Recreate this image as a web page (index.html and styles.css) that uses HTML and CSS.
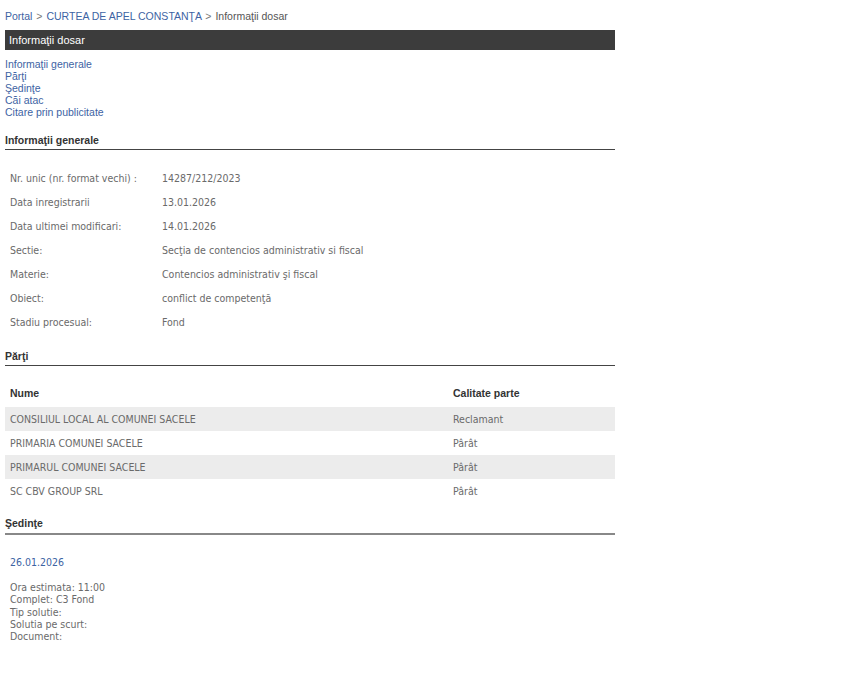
FILE: index.html
```html
<!DOCTYPE html>
<html lang="ro">
<head>
<meta charset="UTF-8" />
<title>Informaţii dosar</title>
<link rel="stylesheet" href="styles.css">
</head>
<body>
<div class="page">
  <div class="breadcrumb">
    <a href="#">Portal</a> <span class="sep">&gt;</span> <a href="#">CURTEA DE APEL CONSTANŢA</a> <span class="sep">&gt;</span> <span class="current">Informaţii dosar</span>
  </div>

  <div class="title-bar">Informaţii dosar</div>

  <div class="toc">
    <a href="#generale">Informaţii generale</a>
    <a href="#parti">Părţi</a>
    <a href="#sedinte">Şedinţe</a>
    <a href="#cai">Căi atac</a>
    <a href="#citare">Citare prin publicitate</a>
  </div>

  <h2 class="section-title first" id="generale">Informaţii generale</h2>
  <table class="info">
    <tr><td class="label">Nr. unic (nr. format vechi) :</td><td>14287/212/2023</td></tr>
    <tr><td class="label">Data inregistrarii</td><td>13.01.2026</td></tr>
    <tr><td class="label">Data ultimei modificari:</td><td>14.01.2026</td></tr>
    <tr><td class="label">Sectie:</td><td>Secţia de contencios administrativ si fiscal</td></tr>
    <tr><td class="label">Materie:</td><td>Contencios administrativ şi fiscal</td></tr>
    <tr><td class="label">Obiect:</td><td>conflict de competenţă</td></tr>
    <tr><td class="label">Stadiu procesual:</td><td>Fond</td></tr>
  </table>

  <h2 class="section-title" id="parti">Părţi</h2>
  <table class="parti">
    <tr><th>Nume</th><th class="col-calitate">Calitate parte</th></tr>
    <tr class="alt"><td>CONSILIUL LOCAL AL COMUNEI SACELE</td><td>Reclamant</td></tr>
    <tr><td>PRIMARIA COMUNEI SACELE</td><td>Pârât</td></tr>
    <tr class="alt"><td>PRIMARUL COMUNEI SACELE</td><td>Pârât</td></tr>
    <tr><td>SC CBV GROUP SRL</td><td>Pârât</td></tr>
  </table>

  <h2 class="section-title thick" id="sedinte">Şedinţe</h2>
  <div class="sedinta">
    <div class="sedinta-date">26.01.2026</div>
    <div class="sedinta-info">
      Ora estimata: 11:00<br>
      Complet: C3 Fond<br>
      Tip solutie:<br>
      Solutia pe scurt:<br>
      Document:
    </div>
  </div>
</div>
</body>
</html>
```

FILE: styles.css
```css
body {
  margin: 0;
  background: #fff;
  font-family: "Liberation Sans", Arial, sans-serif;
  font-size: 10.5px;
  color: #444;
}
a {
  color: #3d63a3;
  text-decoration: none;
}
.page {
  width: 610px;
  padding: 0 0 0 5px;
}
.breadcrumb {
  padding-top: 9px;
  height: 21px;
  line-height: 14px;
  color: #555;
}
.breadcrumb .sep {
  color: #777;
  margin: 0 1px;
}
.title-bar {
  background-color: #3c3c3c;
  color: #fff;
  height: 20px;
  line-height: 20px;
  font-size: 11px;
  padding-left: 4px;
}
.toc {
  margin-top: 8px;
  line-height: 12px;
}
.toc a {
  display: block;
}
.section-title {
  font-size: 10.5px;
  font-weight: bold;
  color: #333;
  margin: 16px 0 0 0;
  padding-bottom: 2px;
  line-height: 13px;
  border-bottom: 1px solid #444;
}
.section-title.thick {
  margin-top: 14px;
  padding-bottom: 3px;
  border-bottom: 2px solid #888;
}
table {
  border-collapse: collapse;
  width: 100%;
  font-family: "DejaVu Sans Condensed", "DejaVu Sans", sans-serif;
  font-size: 10.5px;
  color: #6a6a6a;
}
.info {
  margin-top: 16px;
}
.info td {
  height: 24px;
  padding: 0 0 0 5px;
}
.info td.label {
  width: 147px;
}
.parti {
  margin-top: 13px;
}
.parti th {
  font-family: "Liberation Sans", Arial, sans-serif;
  font-size: 10.5px;
  font-weight: bold;
  color: #333;
  text-align: left;
  height: 28px;
  padding: 0 0 0 5px;
}
.parti th.col-calitate {
  width: 162px;
  padding-left: 0;
}
.parti td {
  height: 24px;
  padding: 0 0 0 5px;
}
.parti td + td {
  padding-left: 0;
}
.parti tr.alt td {
  background-color: #ececec;
}
.sedinta {
  padding: 20px 0 0 5px;
  font-family: "DejaVu Sans Condensed", "DejaVu Sans", sans-serif;
  font-size: 10.5px;
  color: #6a6a6a;
}
.sedinta-date {
  color: #3d63a3;
  line-height: 14px;
}
.sedinta-info {
  margin-top: 12px;
  line-height: 12.25px;
}
```
